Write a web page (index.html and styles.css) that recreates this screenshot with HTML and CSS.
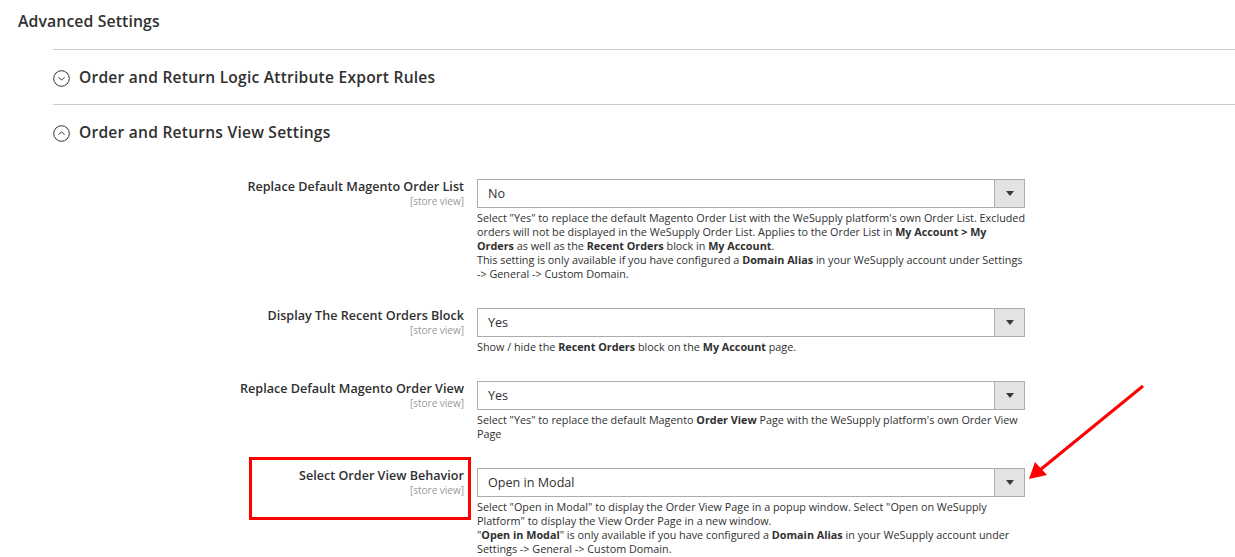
FILE: index.html
```
<!DOCTYPE html>
<html lang="en">
<head>
    <meta charset="UTF-8">
    <title>Advanced Settings</title>
    <link rel="stylesheet" href="styles.css">
</head>
<body>
    <div class="page">
        <div class="section-head">Advanced Settings</div>

        <div class="group">
            <div class="block">
                <div class="block-title">
                    <svg class="toggle" width="17" height="17" viewBox="0 0 17 17">
                        <circle cx="8.5" cy="8.5" r="7.8" fill="none" stroke="#303030" stroke-width="1"/>
                        <path d="M5.5 7.2 L8.5 10.2 L11.5 7.2" fill="none" stroke="#303030" stroke-width="1"/>
                    </svg>
                    Order and Return Logic Attribute Export Rules
                </div>
            </div>

            <div class="block open">
                <div class="block-title">
                    <svg class="toggle" width="17" height="17" viewBox="0 0 17 17">
                        <circle cx="8.5" cy="8.5" r="7.8" fill="none" stroke="#303030" stroke-width="1"/>
                        <path d="M5.5 9.8 L8.5 6.8 L11.5 9.8" fill="none" stroke="#303030" stroke-width="1"/>
                    </svg>
                    Order and Returns View Settings
                </div>

                <div class="fields">
                    <div class="field">
                        <div class="label">
                            <span>Replace Default Magento Order List</span>
                            <span class="scope">[store view]</span>
                        </div>
                        <div class="control">
                            <div class="select"><span>No</span><span class="select-btn"><i></i></span></div>
                            <p class="note">Select "Yes" to replace the default Magento Order List with the WeSupply platform's own Order List. Excluded orders will not be displayed in the WeSupply Order List. Applies to the Order List in <b>My Account &gt; My<br>Orders</b> as well as the <b>Recent Orders</b> block in <b>My Account</b>.<br>This setting is only available if you have configured a <b>Domain Alias</b> in your WeSupply account under Settings <span class="nw">-&gt;</span> General <span class="nw">-&gt;</span> Custom Domain.</p>
                        </div>
                    </div>

                    <div class="field">
                        <div class="label">
                            <span>Display The Recent Orders Block</span>
                            <span class="scope">[store view]</span>
                        </div>
                        <div class="control">
                            <div class="select"><span>Yes</span><span class="select-btn"><i></i></span></div>
                            <p class="note">Show / hide the <b>Recent Orders</b> block on the <b>My Account</b> page.</p>
                        </div>
                    </div>

                    <div class="field">
                        <div class="label">
                            <span>Replace Default Magento Order View</span>
                            <span class="scope">[store view]</span>
                        </div>
                        <div class="control">
                            <div class="select"><span>Yes</span><span class="select-btn"><i></i></span></div>
                            <p class="note">Select "Yes" to replace the default Magento <b>Order View</b> Page with the WeSupply platform's own Order View Page</p>
                        </div>
                    </div>

                    <div class="field">
                        <div class="label marked">
                            <span>Select Order View Behavior</span>
                            <span class="scope">[store view]</span>
                        </div>
                        <div class="control">
                            <div class="select"><span>Open in Modal</span><span class="select-btn"><i></i></span></div>
                            <p class="note">Select "Open in Modal" to display the Order View Page in a popup window. Select "Open on WeSupply Platform" to display the View Order Page in a new window.<br>"<b>Open in Modal</b>" is only available if you have configured a <b>Domain Alias</b> in your WeSupply account under Settings <span class="nw">-&gt;</span> General <span class="nw">-&gt;</span> Custom Domain.</p>
                        </div>
                    </div>
                </div>
            </div>
        </div>

        <!-- annotation arrow -->
        <svg class="pointer" width="1235" height="557" viewBox="0 0 1235 557">
            <line x1="1143" y1="386" x2="1040" y2="470" stroke="#ff0000" stroke-width="3"/>
            <polygon points="1029,479 1035,462 1047,475" fill="#ff0000"/>
        </svg>
    </div>
</body>
</html>
```

FILE: styles.css
```
*{
    margin: 0;
    padding: 0;
    box-sizing: border-box;
}
body{
    background: #fff;
    color: #303030;
    font-family: "Open Sans", "Liberation Sans", sans-serif;
    overflow: hidden;
}
.page{
    position: relative;
    width: 1235px;
    height: 557px;
}
.section-head{
    padding: 11px 18px 18px;
    font-size: 15.8px;
    font-weight: 600;
    line-height: 20px;
    letter-spacing: 0.1px;
}
.group{
    margin-left: 53px;
}
.block{
    border-top: 1px solid #cccccc;
}
.block-title{
    display: flex;
    align-items: center;
    gap: 9px;
    padding: 17px 0;
    font-size: 15.6px;
    font-weight: 600;
    line-height: 20px;
    letter-spacing: 0.22px;
}
.toggle{
    flex: none;
    margin-top: 3px;
}
.fields{
    padding-top: 20px;
}
.field{
    display: grid;
    grid-template-columns: 411px 548px;
    column-gap: 13px;
    margin-bottom: 27px;
}
.label{
    position: relative;
    text-align: right;
    font-size: 12.6px;
    font-weight: 600;
    line-height: 16px;
}
.label span{
    display: block;
}
.label .scope{
    font-size: 10px;
    font-weight: 400;
    line-height: 12px;
    color: #999;
}
.label.marked::before{
    content: "";
    position: absolute;
    top: -11px;
    right: -7px;
    width: 222px;
    height: 63px;
    box-sizing: border-box;
    border: 3px solid #ff0000;
}
.select{
    display: flex;
    justify-content: space-between;
    height: 29px;
    border: 1px solid #adadad;
    font-size: 12.6px;
    line-height: 27px;
}
.select span:first-child{
    padding-left: 10px;
}
.select-btn{
    width: 30px;
    display: flex;
    align-items: center;
    justify-content: center;
    background: #e3e3e3;
    border-left: 1px solid #adadad;
}
.select-btn i{
    width: 0;
    height: 0;
    border-left: 4px solid transparent;
    border-right: 4px solid transparent;
    border-top: 5px solid #41362f;
}
.note{
    margin-top: 3px;
    margin-right: -4px;
    font-size: 10.8px;
    line-height: 14px;
}
.note b{
    font-weight: 700;
}
.nw{
    white-space: nowrap;
}
.pointer{
    position: absolute;
    top: 0;
    left: 0;
}
```
